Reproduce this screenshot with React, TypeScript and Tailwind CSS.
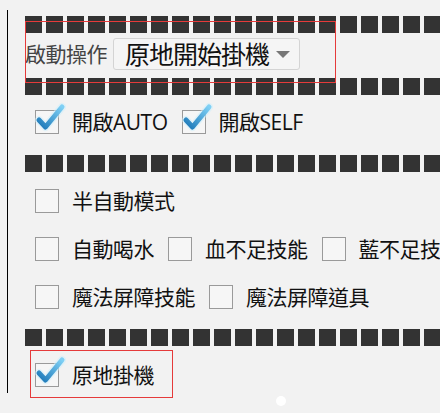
import React from 'react';

const font = { fontFamily: '"Open Sans", "Noto Sans CJK TC", sans-serif' };

function Dashes() {
  return (
    <div className="flex gap-[4px] overflow-hidden w-[415px] shrink-0">
      {Array.from({ length: 20 }).map((_, i) => (
        <div key={i} className="w-[17px] h-[17px] shrink-0 bg-[#333333]" />
      ))}
    </div>
  );
}

function CheckBox({ checked = false }: { checked?: boolean }) {
  return (
    <div className="relative w-[24px] h-[24px] shrink-0 border-[1.5px] border-[#9a9a9a] bg-[#f6f6f6]">
      {checked && (
        <svg className="absolute left-[-2px] top-[-9px]" width="32" height="32" viewBox="0 0 32 32">
          <defs>
            <linearGradient id="chk" x1="1" y1="0" x2="0" y2="1">
              <stop offset="0" stopColor="#7fd0f5" />
              <stop offset="1" stopColor="#1c78b8" />
            </linearGradient>
          </defs>
          <path d="M5 18 L11.5 25 L28 5" fill="none" stroke="#cdeefb" strokeWidth="8" strokeLinecap="round" strokeLinejoin="round" opacity="0.55" />
          <path d="M5 18 L11.5 25 L28 5" fill="none" stroke="url(#chk)" strokeWidth="5" strokeLinecap="round" strokeLinejoin="round" />
        </svg>
      )}
    </div>
  );
}

function Option({ label, checked }: { label: string; checked?: boolean }) {
  return (
    <div className="flex items-center">
      <CheckBox checked={checked} />
      <span className="ml-[13px] mr-[14px] text-[21px] tracking-[-0.5px] leading-[24px] text-[#111] whitespace-nowrap">{label}</span>
    </div>
  );
}

export default function App() {
  return (
    <div className="relative w-[440px] h-[413px] bg-[#f2f2f2] overflow-hidden" style={font}>
      <div className="ml-[7px] pt-[10px]">
        <div className="h-[383px] border-l border-black pl-[17px] flex flex-col">
          <div className="mt-[6px]">
            <Dashes />
          </div>
          <div className="mt-[5px] h-[32px] flex items-center">
            <span className="text-[21px] tracking-[-0.5px] leading-[24px] text-[#444] whitespace-nowrap">啟動操作</span>
            <div className="ml-[6px] w-[187px] h-[32px] flex items-center justify-between rounded-[3px] border border-[#d4d4d4] bg-[#f5f5f5] pl-[11px] pr-[9px]">
              <span className="text-[25px] tracking-[-1px] leading-[28px] text-[#111] whitespace-nowrap">原地開始掛機</span>
              <span className="w-0 h-0 border-l-[7px] border-r-[7px] border-t-[7px] border-l-transparent border-r-transparent border-t-[#777]" />
            </div>
          </div>
          <div className="mt-[8px]">
            <Dashes />
          </div>
          <div className="mt-[15px] ml-[10px] flex items-center">
            <Option label="開啟AUTO" checked />
            <Option label="開啟SELF" checked />
          </div>
          <div className="mt-[21px]">
            <Dashes />
          </div>
          <div className="mt-[17px] ml-[10px] flex items-center">
            <Option label="半自動模式" />
          </div>
          <div className="mt-[24px] ml-[10px] flex items-center">
            <Option label="自動喝水" />
            <Option label="血不足技能" />
            <Option label="藍不足技能" />
          </div>
          <div className="mt-[24px] ml-[10px] flex items-center">
            <Option label="魔法屏障技能" />
            <Option label="魔法屏障道具" />
          </div>
          <div className="mt-[20px]">
            <Dashes />
          </div>
          <div className="mt-[17px] ml-[10px] flex items-center">
            <Option label="原地掛機" checked />
          </div>
        </div>
      </div>
      <div className="absolute left-[25px] top-[21px] w-[311px] h-[62px] border border-[#e53a3a]" />
      <div className="absolute left-[30px] top-[350px] w-[143px] h-[48px] border border-[#e53a3a]" />
      <div className="absolute left-[276px] top-[396px] w-[10px] h-[10px] rounded-full bg-white" />
    </div>
  );
}
